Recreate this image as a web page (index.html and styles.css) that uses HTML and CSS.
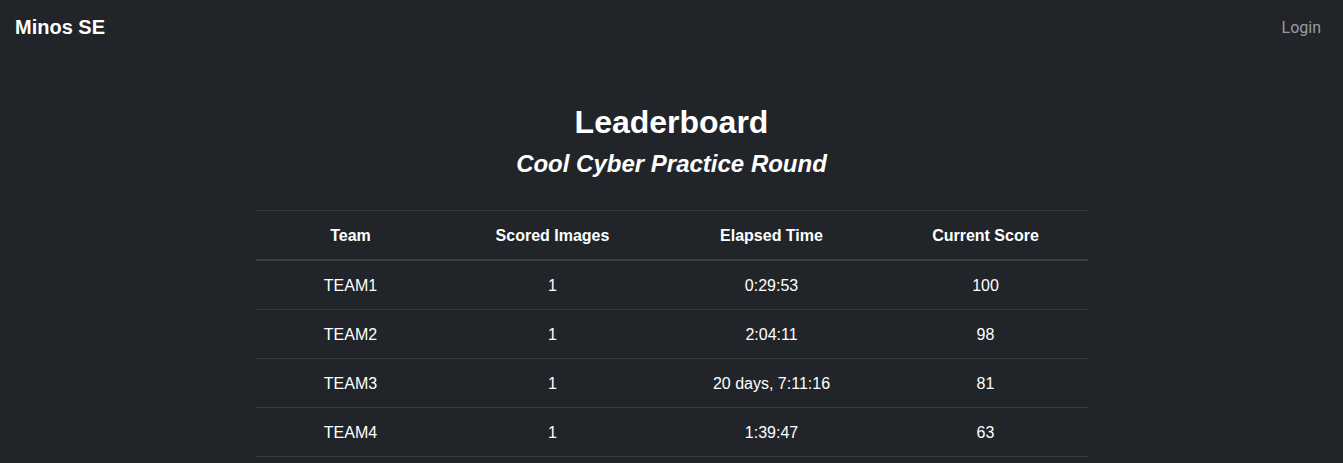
FILE: index.html
```html
<!DOCTYPE html>
<html lang="en">
<head>
<meta charset="utf-8">
<title>Leaderboard</title>
<link rel="stylesheet" href="styles.css">
</head>
<body>
<nav class="navbar">
  <a class="brand" href="#">Minos SE</a>
  <a class="nav-link" href="#">Login</a>
</nav>
<main class="content">
  <h1 class="title">Leaderboard</h1>
  <h2 class="subtitle">Cool Cyber Practice Round</h2>
  <table class="board">
    <colgroup>
      <col class="c1"><col class="c2"><col class="c3"><col class="c4">
    </colgroup>
    <thead>
      <tr><th>Team</th><th>Scored Images</th><th>Elapsed Time</th><th>Current Score</th></tr>
    </thead>
    <tbody>
      <tr><td>TEAM1</td><td>1</td><td>0:29:53</td><td>100</td></tr>
      <tr><td>TEAM2</td><td>1</td><td>2:04:11</td><td>98</td></tr>
      <tr><td>TEAM3</td><td>1</td><td>20 days, 7:11:16</td><td>81</td></tr>
      <tr><td>TEAM4</td><td>1</td><td>1:39:47</td><td>63</td></tr>
    </tbody>
  </table>
</main>
</body>
</html>
```
FILE: styles.css
```css
html, body {
  margin: 0;
  padding: 0;
  background: #212529;
  color: #ffffff;
  font-family: "Liberation Sans", Arial, sans-serif;
  font-size: 16px;
  line-height: 1.5;
}
.navbar {
  display: flex;
  justify-content: space-between;
  align-items: center;
  height: 55px;
  padding: 0 22px 0 15px;
}
.brand {
  color: #ffffff;
  font-weight: bold;
  font-size: 20px;
  text-decoration: none;
  margin-bottom: 2px;
}
.nav-link {
  color: rgba(255, 255, 255, 0.55);
  font-family: Roboto, "Liberation Sans", sans-serif;
  font-size: 16px;
  text-decoration: none;
}
.content {
  display: flex;
  flex-direction: column;
  align-items: center;
  padding-top: 47px;
}
.title {
  margin: 0;
  font-size: 32px;
  font-weight: bold;
  line-height: 40px;
}
.subtitle {
  margin: 2px 0 0;
  font-size: 24px;
  font-weight: bold;
  font-style: italic;
  line-height: 40px;
}
.board {
  margin-top: 26px;
  width: 832px;
  border-collapse: collapse;
  table-layout: fixed;
}
.c1 { width: 190px; }
.c2 { width: 214px; }
.c3 { width: 224px; }
.c4 { width: 204px; }
.board th, .board td {
  text-align: center;
  padding: 13px 8px 11px;
  line-height: 24px;
  border-bottom: 1px solid #373b3e;
}
.board thead tr {
  border-top: 1px solid #373b3e;
}
.board th {
  font-weight: bold;
  border-bottom: 2px solid #3b3f43;
}
```
